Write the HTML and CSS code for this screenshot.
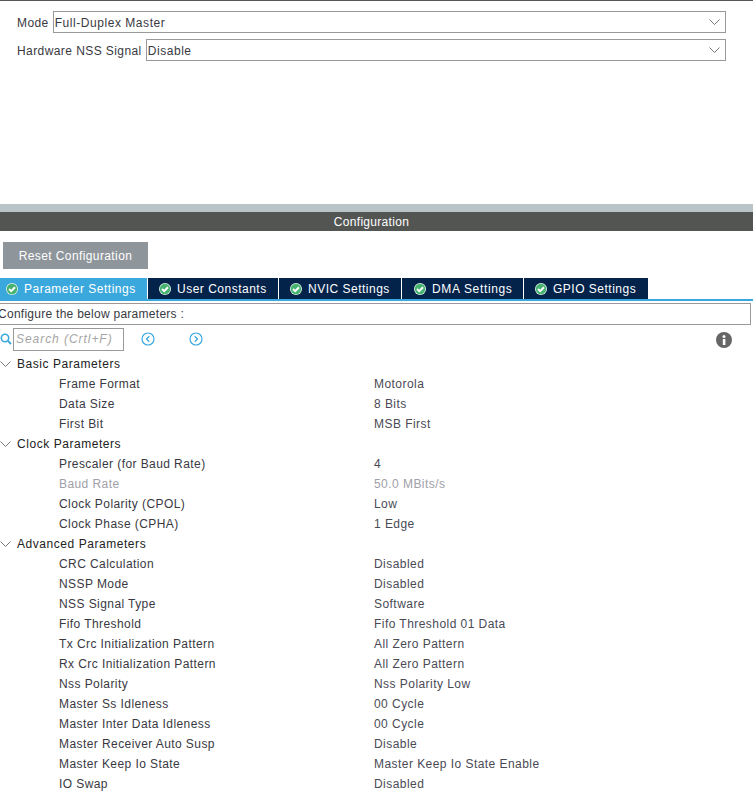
FILE: index.html
```html
<!DOCTYPE html>
<html lang="en">
<head>
<meta charset="utf-8">
<title>SPI Configuration</title>
<link rel="stylesheet" href="styles.css">
</head>
<body>
<svg class="defs" width="0" height="0" aria-hidden="true">
  <symbol id="check" viewBox="0 0 12 12">
    <circle cx="6" cy="6" r="6" fill="#dff0e4"/>
    <circle cx="6" cy="6" r="5.2" fill="#45b26f"/>
    <path d="M3 6 5.2 8.1 9 4.2" fill="none" stroke="#fff" stroke-width="2"/>
  </symbol>
  <symbol id="chev" viewBox="0 0 11 6">
    <path d="M.5.5 5.5 5.5 10.5.5" fill="none" stroke="currentColor" stroke-width="1"/>
  </symbol>
</svg>

<section class="mode">
  <div class="mode-row">
    <span class="mode-label">Mode</span>
    <div class="select"><span>Full-Duplex Master</span><svg class="select-chev"><use href="#chev"/></svg></div>
  </div>
  <div class="mode-row">
    <span class="mode-label">Hardware NSS Signal</span>
    <div class="select"><span>Disable</span><svg class="select-chev"><use href="#chev"/></svg></div>
  </div>
</section>

<div class="band"></div>
<header class="title">Configuration</header>

<div class="actions"><button class="reset" type="button">Reset Configuration</button></div>

<nav class="tabs">
  <div class="tab tab-active tab-w1"><svg class="tab-icon"><use href="#check"/></svg>Parameter Settings</div>
  <div class="tab tab-w2"><svg class="tab-icon"><use href="#check"/></svg>User Constants</div>
  <div class="tab tab-w3"><svg class="tab-icon"><use href="#check"/></svg>NVIC Settings</div>
  <div class="tab tab-w4"><svg class="tab-icon"><use href="#check"/></svg>DMA Settings</div>
  <div class="tab tab-w5"><svg class="tab-icon"><use href="#check"/></svg>GPIO Settings</div>
</nav>

<div class="hint">Configure the below parameters :</div>

<div class="tools">
  <svg class="search-icon" viewBox="0 0 12 12"><circle cx="5" cy="5" r="3.7" fill="none" stroke="#3aa8dc" stroke-width="1.6"/><path d="M7.7 7.7 11 11" stroke="#3aa8dc" stroke-width="1.8"/></svg>
  <div class="search">Search (Crtl+F)</div>
  <svg class="nav-icon nav-prev" viewBox="0 0 14 14"><circle cx="7" cy="7" r="6" fill="none" stroke="#3aa8dc" stroke-width="1.2"/><path d="M8.3 4.2 5.5 7l2.8 2.8" fill="none" stroke="#3aa8dc" stroke-width="1.3"/></svg>
  <svg class="nav-icon nav-next" viewBox="0 0 14 14"><circle cx="7" cy="7" r="6" fill="none" stroke="#3aa8dc" stroke-width="1.2"/><path d="M5.7 4.2 8.5 7l-2.8 2.8" fill="none" stroke="#3aa8dc" stroke-width="1.3"/></svg>
  <svg class="info-icon" viewBox="0 0 16 16"><circle cx="8" cy="8" r="8" fill="#666"/><rect x="6.8" y="7" width="2.6" height="6" fill="#fff"/><circle cx="8" cy="4.6" r="1.5" fill="#fff"/></svg>
</div>

<div class="params">
  <div class="group"><svg class="group-chev"><use href="#chev"/></svg>Basic Parameters</div>
  <div class="row"><span class="key">Frame Format</span><span class="val">Motorola</span></div>
  <div class="row"><span class="key">Data Size</span><span class="val">8 Bits</span></div>
  <div class="row"><span class="key">First Bit</span><span class="val">MSB First</span></div>
  <div class="group"><svg class="group-chev"><use href="#chev"/></svg>Clock Parameters</div>
  <div class="row"><span class="key">Prescaler (for Baud Rate)</span><span class="val">4</span></div>
  <div class="row row-off"><span class="key">Baud Rate</span><span class="val">50.0 MBits/s</span></div>
  <div class="row"><span class="key">Clock Polarity (CPOL)</span><span class="val">Low</span></div>
  <div class="row"><span class="key">Clock Phase (CPHA)</span><span class="val">1 Edge</span></div>
  <div class="group"><svg class="group-chev"><use href="#chev"/></svg>Advanced Parameters</div>
  <div class="row"><span class="key">CRC Calculation</span><span class="val">Disabled</span></div>
  <div class="row"><span class="key">NSSP Mode</span><span class="val">Disabled</span></div>
  <div class="row"><span class="key">NSS Signal Type</span><span class="val">Software</span></div>
  <div class="row"><span class="key">Fifo Threshold</span><span class="val">Fifo Threshold 01 Data</span></div>
  <div class="row"><span class="key">Tx Crc Initialization Pattern</span><span class="val">All Zero Pattern</span></div>
  <div class="row"><span class="key">Rx Crc Initialization Pattern</span><span class="val">All Zero Pattern</span></div>
  <div class="row"><span class="key">Nss Polarity</span><span class="val">Nss Polarity Low</span></div>
  <div class="row"><span class="key">Master Ss Idleness</span><span class="val">00 Cycle</span></div>
  <div class="row"><span class="key">Master Inter Data Idleness</span><span class="val">00 Cycle</span></div>
  <div class="row"><span class="key">Master Receiver Auto Susp</span><span class="val">Disable</span></div>
  <div class="row"><span class="key">Master Keep Io State</span><span class="val">Master Keep Io State Enable</span></div>
  <div class="row"><span class="key">IO Swap</span><span class="val">Disabled</span></div>
</div>
</body>
</html>
```
FILE: styles.css
```css
* { box-sizing: border-box; }
html, body { margin: 0; padding: 0; overflow: hidden; }
body {
  width: 753px;
  height: 795px;
  background: #fff;
  color: #39393f;
  font: 12px/20px "Liberation Sans", Arial, sans-serif;
  letter-spacing: 0.42px;
}
.defs { position: absolute; }

.mode {
  height: 204px;
  padding: 10px 27px 0 17px;
  border-top: 1px solid #555;
}
.mode-row { display: flex; align-items: center; gap: 4px; height: 22px; margin-bottom: 6px; }
.mode-label { white-space: nowrap; position: relative; top: 1px; }
.select {
  flex: 1;
  height: 22px;
  display: flex;
  align-items: center;
  justify-content: space-between;
  padding: 1px 4px 0 1px;
  border: 1px solid #999;
  letter-spacing: 0.55px;
}
.select-chev { width: 11px; height: 6px; margin-right: 1px; margin-top: -1px; color: #777; }

.band { height: 8px; background: #b9c4c9; }
.title {
  height: 19px;
  padding-right: 10px;
  background: #535553;
  color: #fff;
  text-align: center;
  line-height: 20px;
  letter-spacing: 0.3px;
}

.actions { padding: 11px 0 9px 3px; }
.reset {
  display: block;
  width: 145px;
  height: 27px;
  padding: 0;
  border: 0;
  background: #8e959b;
  color: #fff;
  font: inherit;
  letter-spacing: 0.4px;
}

.tabs {
  display: flex;
  gap: 1px;
  height: 23px;
  border-bottom: 2px solid #3aa8dc;
}
.tab {
  height: 21px;
  display: flex;
  align-items: center;
  padding-left: 11px;
  background: #03234b;
  color: #fff;
  letter-spacing: 0.5px;
  white-space: nowrap;
}
.tab-active { background: #3aa8dc; padding-left: 6px; }
.tab-w1 { width: 147px; }
.tab-w2 { width: 130px; }
.tab-w3 { width: 122px; }
.tab-w4 { width: 121px; padding-left: 12px; letter-spacing: 0.65px; }
.tab-w5 { width: 124px; }
.tab-icon { width: 12px; height: 12px; margin-right: 6px; flex: none; }

.hint {
  height: 22px;
  margin-top: 2px;
  margin-left: -4px;
  width: 755px;
  padding-left: 1px;
  border: 1px solid #999;
  line-height: 20px;
  letter-spacing: 0.27px;
}

.tools { position: relative; height: 29px; padding: 3px 0 0 13px; }
.search {
  width: 111px;
  height: 23px;
  padding-left: 2px;
  border: 1px solid #999;
  color: #a5a5a5;
  font-style: italic;
  line-height: 21px;
  letter-spacing: 0.95px;
}
.search-icon { position: absolute; left: 0; top: 8px; width: 12px; height: 12px; }
.nav-icon { position: absolute; top: 7px; width: 14px; height: 14px; }
.nav-prev { left: 141px; }
.nav-next { left: 189px; }
.info-icon { position: absolute; left: 716px; top: 7px; width: 16px; height: 16px; }

.group { position: relative; height: 20px; padding-left: 17px; color: #222; letter-spacing: 0.55px; }
.group-chev { position: absolute; left: 0; top: 7px; width: 11px; height: 6px; color: #777; }
.row { display: flex; height: 20px; padding-left: 59px; }
.key { width: 315px; }
.val { color: #4a4a55; letter-spacing: 0.45px; }
.row-off .key, .row-off .val { color: #a0a0a8; }
```
